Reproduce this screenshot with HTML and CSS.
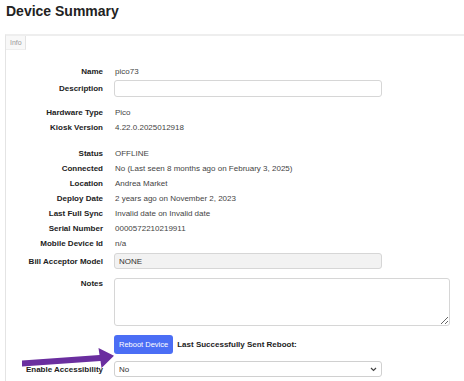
FILE: index.html
```html
<!DOCTYPE html>
<html lang="en">
<head>
  <meta charset="UTF-8">
  <title>Device Summary</title>
  <link rel="stylesheet" href="styles.css">
</head>
<body>
  <h1 class="title">Device Summary</h1>

  <div class="panel">
    <div class="tab">Info</div>

    <div class="fields">
      <div class="row"><span class="label">Name</span><span class="value">pico73</span></div>
      <div class="row row-desc"><span class="label">Description</span><input class="text-input" type="text"></div>

      <div class="row row-group"><span class="label">Hardware Type</span><span class="value">Pico</span></div>
      <div class="row"><span class="label">Kiosk Version</span><span class="value">4.22.0.2025012918</span></div>

      <div class="row row-group2"><span class="label">Status</span><span class="value">OFFLINE</span></div>
      <div class="row"><span class="label">Connected</span><span class="value">No (Last seen 8 months ago on February 3, 2025)</span></div>
      <div class="row"><span class="label">Location</span><span class="value">Andrea Market</span></div>
      <div class="row"><span class="label">Deploy Date</span><span class="value">2 years ago on November 2, 2023</span></div>
      <div class="row"><span class="label">Last Full Sync</span><span class="value">Invalid date on Invalid date</span></div>
      <div class="row"><span class="label">Serial Number</span><span class="value">0000572210219911</span></div>
      <div class="row"><span class="label">Mobile Device Id</span><span class="value">n/a</span></div>
      <div class="row row-bill"><span class="label">Bill Acceptor Model</span><input class="text-input readonly" type="text" value="NONE" readonly></div>

      <div class="row row-notes"><span class="label">Notes</span><textarea class="notes"></textarea></div>

      <div class="row row-reboot">
        <span class="label"></span>
        <div class="reboot">
          <button class="btn-reboot">Reboot Device</button>
          <strong class="last-sent">Last Successfully Sent Reboot:</strong>
        </div>
      </div>

      <div class="row row-access">
        <span class="label">Enable Accessibility</span>
        <div class="select">
          <span>No</span>
          <svg width="7" height="5" viewBox="0 0 7 5"><path d="M1 1 L3.5 3.5 L6 1" fill="none" stroke="#444" stroke-width="1.2"/></svg>
        </div>
      </div>
    </div>
  </div>

  <!-- annotation arrow -->
  <svg class="arrow" width="120" height="35" viewBox="0 0 120 35">
    <polygon points="22,20.5 99.5,15 98.5,8 114,15.8 101.5,28 100.5,21 22,26.5" fill="#6a2e9f"/>
  </svg>
</body>
</html>
```

FILE: styles.css
```css
body {
  margin: 0;
  font-family: "Liberation Sans", Arial, sans-serif;
  font-size: 8px;
  color: #333;
  background: #fff;
  position: relative;
}
.title {
  margin: 1px 0 13px 6px;
  font-size: 14px;
  line-height: 20px;
  color: #222;
}
.panel {
  margin-left: 5px;
  padding-bottom: 4px;
  border-top: 2px solid #eee;
  border-left: 1px solid #e4e4e4;
}
.tab {
  width: 20px;
  height: 14px;
  line-height: 14px;
  box-sizing: border-box;
  padding-left: 4px;
  font-size: 7px;
  color: #999;
  background: #f8f8f8;
  border-right: 1px solid #e3e3e3;
  border-bottom: 1px solid #eee;
}
.fields {
  padding-top: 14px;
}
.row {
  display: grid;
  grid-template-columns: 97px 1fr;
  column-gap: 11px;
  align-items: center;
  line-height: 15px;
}
.label {
  text-align: right;
  font-weight: bold;
  color: #222;
}
.value {
  padding-left: 1px;
  color: #444;
}
.row-desc {
  margin-top: 1px;
}
.row-group {
  margin-top: 8px;
}
.row-group2 {
  margin-top: 11px;
}
.row-bill {
  margin-top: 2px;
}
.text-input {
  width: 268px;
  height: 17px;
  box-sizing: border-box;
  margin: 0;
  padding: 0 4px;
  border: 1px solid #d6d6d6;
  border-radius: 3px;
  font-family: inherit;
  font-size: 8px;
  color: #333;
  outline: none;
}
.readonly {
  height: 16px;
  background: #f2f2f2;
}
.row-notes {
  margin-top: 9px;
  align-items: start;
}
.row-notes .label {
  line-height: 11px;
}
.notes {
  display: block;
  width: 336px;
  height: 48px;
  box-sizing: border-box;
  margin: 0;
  border: 1px solid #d6d6d6;
  border-radius: 3px;
  font-family: inherit;
}
.row-reboot {
  margin-top: 9px;
}
.reboot {
  display: flex;
  align-items: center;
}
.btn-reboot {
  height: 19px;
  padding: 0 5px;
  border: none;
  border-radius: 3px;
  background-color: #4b6ef5;
  color: #fff;
  font-family: inherit;
  font-size: 7.5px;
}
.last-sent {
  margin-left: 4px;
  color: #222;
}
.row-access {
  margin-top: 7px;
}
.select {
  display: flex;
  align-items: center;
  justify-content: space-between;
  width: 268px;
  height: 16px;
  box-sizing: border-box;
  padding: 0 4px;
  border: 1px solid #d0d0d0;
  border-radius: 3px;
  color: #333;
}
.arrow {
  position: absolute;
  left: 0;
  top: 340px;
}
```
